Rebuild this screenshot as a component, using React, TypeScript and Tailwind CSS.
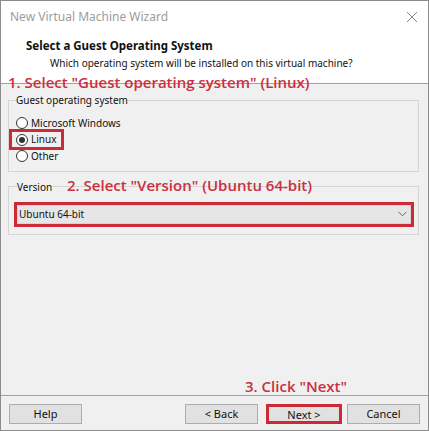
import React from "react";

const ui = { fontFamily: '"Noto Sans", "Liberation Sans", sans-serif' };
const note = { fontFamily: '"Open Sans", "Noto Sans", sans-serif' };

function Radio({ label, checked }: { label: string; checked?: boolean }) {
    return (
        <div className="flex h-[16.5px] items-center">
            <span className="flex h-[12px] w-[12px] items-center justify-center rounded-full border border-[#333] bg-white">
                {checked && <span className="h-[6px] w-[6px] rounded-full bg-[#333]" />}
            </span>
            <span className="ml-[3px] text-[10px] text-[#111]">{label}</span>
        </div>
    );
}

function Button({ label, highlight }: { label: string; highlight?: boolean }) {
    return (
        <button
            className={
                highlight
                    ? "h-[20px] w-[76px] border-[3px] border-[#cc2a36] bg-[#e1e1e1] text-[11px] text-[#111]"
                    : "h-[20px] w-[73px] border border-[#adadad] bg-[#e1e1e1] text-[11px] text-[#111]"
            }
        >
            {label}
        </button>
    );
}

export default function App() {
    return (
        <div
            className="relative flex h-[431px] w-[429px] flex-col border border-[#8c8c8c] bg-[#f0f0f0]"
            style={ui}
        >
            {/* title bar */}
            <div className="flex h-[32px] items-center justify-between bg-white pl-[9px] pr-[10px]">
                <span className="text-[12px] text-[#9c9c9c]">New Virtual Machine Wizard</span>
                <svg width="12" height="12" viewBox="0 0 12 12" className="text-[#8a8a8a]">
                    <path d="M1 1 L11 11 M11 1 L1 11" stroke="currentColor" strokeWidth="1" fill="none" />
                </svg>
            </div>

            {/* header */}
            <div className="flex h-[50px] flex-col bg-white pl-[25px] pt-[5px]">
                <span className="text-[11.5px] leading-[16px] font-bold text-[#111]">
                    Select a Guest Operating System
                </span>
                <span className="ml-[24px] mt-[1px] text-[10px] leading-[16px] text-[#111]">
                    Which operating system will be installed on this virtual machine?
                </span>
            </div>
            <div className="h-px bg-[#a0a0a0]" />

            {/* body */}
            <div className="flex flex-1 flex-col">
                <fieldset className="ml-[7px] mr-[9px] mt-[9px] border border-[#d5d5d5] px-[7px] pb-[6px]">
                    <legend className="text-[10px] leading-[14px] text-[#111]">Guest operating system</legend>
                    <div className="relative mt-[8px] flex flex-col">
                        <Radio label="Microsoft Windows" />
                        <div className="relative">
                            <Radio label="Linux" checked />
                            <span className="absolute left-[-7px] top-[-2.5px] h-[21px] w-[55px] border-[3px] border-[#cc2a36]" />
                        </div>
                        <Radio label="Other" />
                    </div>
                </fieldset>

                <fieldset className="ml-[7px] mr-[9px] mt-[8px] border border-[#d5d5d5] pb-[7px] pl-[5px] pr-[4px]">
                    <legend className="ml-[3px] text-[10px] leading-[14px] text-[#111]">Version</legend>
                    <div className="mt-[8px] h-[25px] border-[3px] border-[#cc2a36]">
                        <div className="flex h-full items-center justify-between border border-[#d4d4d4] bg-[#e6e6e6] pl-[1px] pr-[3px]">
                            <span className="text-[10px] text-[#111]">Ubuntu 64-bit</span>
                            <svg width="9" height="6" viewBox="0 0 9 6">
                                <path d="M0.5 0.8 L4.5 4.8 L8.5 0.8" stroke="#666" strokeWidth="1" fill="none" />
                            </svg>
                        </div>
                    </div>
                </fieldset>

                <div className="flex-1" />
                <div className="flex h-[18px] items-center pl-[244px]" style={note}>
                    <span className="text-[15px] font-semibold text-[#c9303e]">3. Click "Next"</span>
                </div>
            </div>
            <div className="h-px bg-[#a0a0a0]" />

            {/* buttons */}
            <div className="flex h-[34px] items-start pl-[8px] pr-[8px] pt-[8px]">
                <Button label="Help" />
                <div className="flex-1" />
                <Button label="< Back" />
                <div className="w-[8px]" />
                <Button label="Next >" highlight />
                <div className="w-[5px]" />
                <Button label="Cancel" />
            </div>

            {/* annotations */}
            <span
                className="absolute left-[7px] top-[72px] text-[15px] font-semibold leading-[18px] text-[#c9303e]"
                style={note}
            >
                1. Select "Guest operating system" (Linux)
            </span>
            <span
                className="absolute left-[66px] top-[175px] text-[15px] font-semibold leading-[18px] text-[#c9303e]"
                style={note}
            >
                2. Select "Version" (Ubuntu 64-bit)
            </span>
        </div>
    );
}
